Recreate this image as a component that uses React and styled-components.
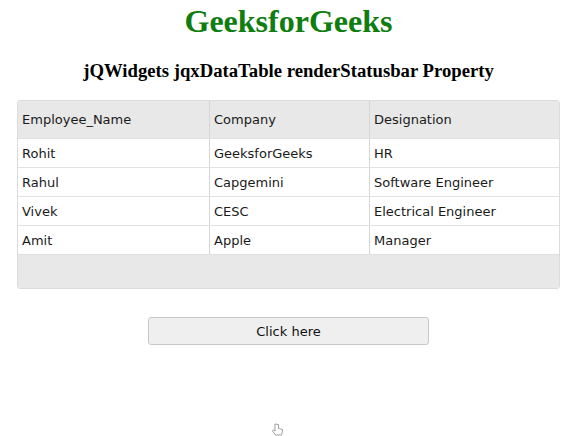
import React from 'react';
import styled, { createGlobalStyle } from 'styled-components';

const GlobalStyle = createGlobalStyle`
  body {
    margin: 0;
    background: #fff;
    font-family: "Liberation Serif", serif;
  }
`;

const Page = styled.div`
  width: 577px;
  height: 436px;
  position: relative;
  display: flex;
  flex-flow: column;
  align-items: center;
`;

const Title = styled.h1`
  margin: 3px 0 0;
  color: #0f7d0f;
  font-size: 32px;
  line-height: 36px;
  font-weight: bold;
`;

const SubTitle = styled.h3`
  margin: 20px 0 0;
  font-size: 18.7px;
  line-height: 24px;
  font-weight: bold;
  color: #000;
`;

const Table = styled.div`
  margin-top: 17px;
  width: 541px;
  border: 1px solid #dcdcdc;
  border-radius: 3px;
  overflow: hidden;
  font-family: "DejaVu Sans", Verdana, sans-serif;
  font-size: 13px;
  color: #1a1a1a;
`;

const Row = styled.div`
  display: grid;
  grid-template-columns: 191px 160px 1fr;
  height: ${props => (props.header ? '37px' : '29px')};
  background: ${props => (props.header ? '#e8e8e8' : '#fff')};
  border-top: ${props => (props.header ? 'none' : '1px solid #e2e2e2')};
  box-sizing: border-box;
`;

const Cell = styled.div`
  display: flex;
  align-items: center;
  padding-left: 4px;
  border-left: ${props => (props.first ? 'none' : '1px solid #d6d6d6')};
`;

const StatusBar = styled.div`
  height: 33px;
  background: #e8e8e8;
  border-top: 1px solid #e0e0e0;
`;

const Button = styled.button`
  margin-top: 28px;
  width: 281px;
  height: 28px;
  border: 1px solid #c8c8c8;
  border-radius: 3px;
  background: #efefef;
  font-family: "DejaVu Sans", Verdana, sans-serif;
  font-size: 13px;
  color: #111;
`;

const Cursor = styled.svg`
  position: absolute;
  left: 270px;
  top: 423px;
`;

const rows = [
  ['Rohit', 'GeeksforGeeks', 'HR'],
  ['Rahul', 'Capgemini', 'Software Engineer'],
  ['Vivek', 'CESC', 'Electrical Engineer'],
  ['Amit', 'Apple', 'Manager'],
];

export default function App() {
  return (
    <Page>
      <GlobalStyle />
      <Title>GeeksforGeeks</Title>
      <SubTitle>jQWidgets jqxDataTable renderStatusbar Property</SubTitle>
      <Table>
        <Row header>
          <Cell first>Employee_Name</Cell>
          <Cell>Company</Cell>
          <Cell>Designation</Cell>
        </Row>
        {rows.map(r => (
          <Row key={r[0]}>
            <Cell first>{r[0]}</Cell>
            <Cell>{r[1]}</Cell>
            <Cell>{r[2]}</Cell>
          </Row>
        ))}
        <StatusBar />
      </Table>
      <Button>Click here</Button>
      <Cursor width="14" height="14" viewBox="0 0 14 14">
        <path
          d="M5 1v7L3.5 6.8 2.5 8l3 4h6l1-4V6.5l-2-.5-1-.3-1-.2V1.5z"
          fill="#fff"
          stroke="#888"
          strokeWidth="0.8"
        />
      </Cursor>
    </Page>
  );
}
